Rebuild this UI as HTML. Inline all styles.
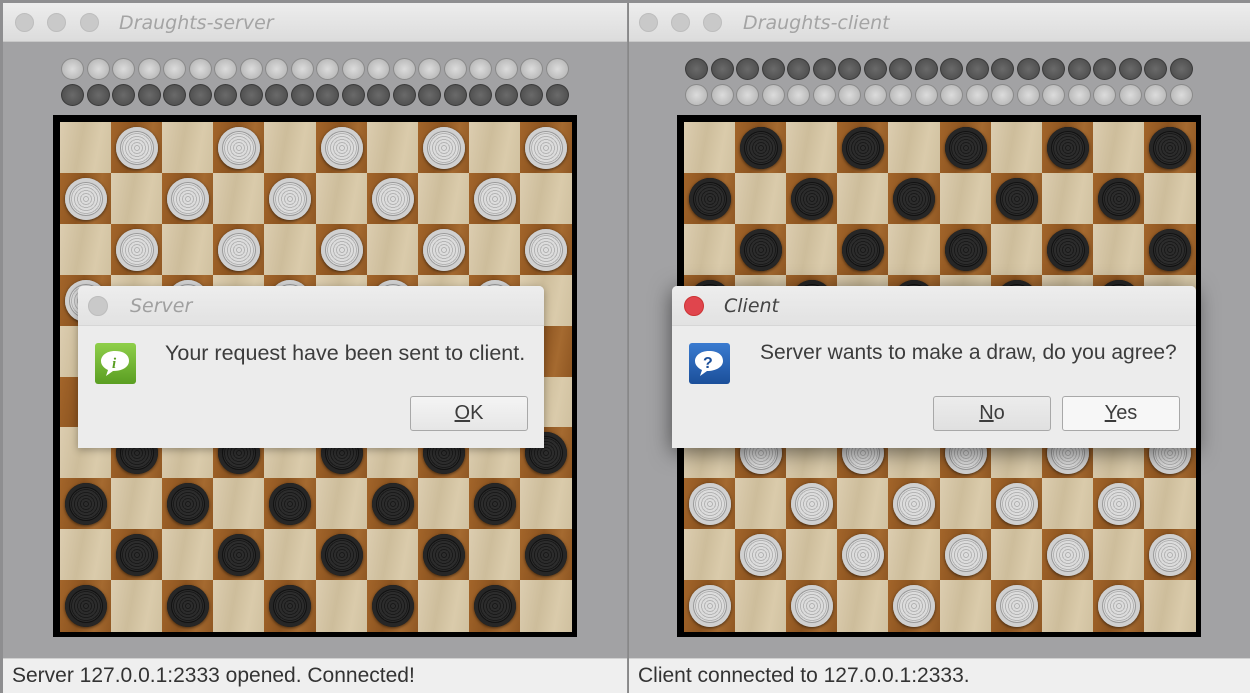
<!DOCTYPE html>
<html><head><meta charset="utf-8"><style>
*{margin:0;padding:0;box-sizing:border-box}
body{width:1250px;height:693px;background:#8e8e90;position:relative;overflow:hidden;font-family:"Liberation Sans","DejaVu Sans",sans-serif}
.win{position:absolute;top:3px;height:690px;background:#a2a2a4}
.tb{position:absolute;left:0;right:0;top:0;height:39px;background:linear-gradient(#ededed,#dcdcdc);border-bottom:1px solid #c8c8c8}
.dot{position:absolute;top:10px;width:19px;height:19px;border-radius:50%;background:#c9c9c9;border:1px solid #bdbdbd}
.tt{position:absolute;top:9px;font-family:"DejaVu Sans",sans-serif;font-style:italic;font-size:19px;color:#a4a4a4}
.status{position:absolute;left:0;right:0;top:655px;height:35px;background:#efefef;border-top:1px solid #d0d0d0;font-size:21px;color:#333;padding:5px 0 0 9px}
.board{position:absolute;top:115px;width:524px;height:522px;background:#000}
.sq{position:absolute;width:52px;height:52px}
.l{background:linear-gradient(100deg,#dccdb0,#cdbd9b 40%,#dacbab 70%,#cfc09f)}
.d{background:linear-gradient(100deg,#a3652a,#8c5420 40%,#a56a30 70%,#8e5622)}
.pc{position:absolute;width:42px;height:42px;border-radius:50%}
.w{background:repeating-radial-gradient(circle,#dcdcdc 0 2px,#b4b4b4 2px 3px);box-shadow:inset 0 0 0 4px #d0d0d0,inset 0 0 0 5px #999,0 1px 3px rgba(0,0,0,.6)}
.b{background:repeating-radial-gradient(circle,#2c2c2c 0 2px,#1a1a1a 2px 3px);box-shadow:inset 0 0 0 4px #262626,inset 0 0 0 5px #111,0 1px 3px rgba(0,0,0,.6)}
.mp{position:absolute;width:23px;height:22px;border-radius:50%}
.mw{background:radial-gradient(circle,#dcdcdc,#bcbcbc 70%,#a0a0a0);border:1px solid #8a8a8a}
.mb{background:radial-gradient(circle,#6a6a6a,#525252 70%,#3a3a3a);border:1px solid #3a3a3a}
.dlg{position:absolute;top:286px;height:162px;background:#ececec;border-radius:5px 5px 0 0}
.dtb{position:absolute;left:0;right:0;top:0;height:40px;background:linear-gradient(#ededed,#e2e2e2);border-radius:5px 5px 0 0;border-bottom:1px solid #d6d6d6}
.dt{position:absolute;top:9px;left:52px;font-family:"DejaVu Sans",sans-serif;font-style:italic;font-size:19px}
.msg{position:absolute;top:55px;font-size:21.5px;color:#3c3c3c;white-space:nowrap}
.btn{position:absolute;top:110px;width:118px;height:35px;border:1px solid #a8a8a8;border-radius:3px;background:linear-gradient(#f4f4f4,#e6e6e6);font-size:20px;color:#3c3c3c;text-align:center;line-height:33px}
.ic{position:absolute;top:57px;left:17px;width:41px;height:41px;border-radius:3px}
</style></head><body>
<div class="win" style="left:3px;width:624px">
 <div class="tb"><div class="dot" style="left:12px"></div><div class="dot" style="left:44px"></div><div class="dot" style="left:77px"></div><div class="tt" style="left:116px">Draughts-server</div></div>
 <div class="status">Server 127.0.0.1:2333 opened. Connected!</div>
</div>
<div class="win" style="left:628px;width:622px;border-left:1px solid #888">
 <div class="tb"><div class="dot" style="left:10px"></div><div class="dot" style="left:42px"></div><div class="dot" style="left:74px"></div><div class="tt" style="left:114px">Draughts-client</div></div>
 <div class="status">Client connected to 127.0.0.1:2333.</div>
</div>
<div id="b1" class="board" style="left:53px"></div>
<div id="b2" class="board" style="left:677px"></div>
<div id="m"></div>

<div class="dlg" style="left:78px;width:466px;box-shadow:0 2px 8px rgba(0,0,0,.3)">
 <div class="dtb"><div class="dot" style="left:10px;top:10px;width:20px;height:20px"></div><div class="dt" style="color:#a0a0a0">Server</div></div>
 <div class="ic" style="background:linear-gradient(#8fcf4a,#5a9e22)"><svg width="41" height="41"><path d="M20 8c-9 0-14 5-14 10 0 4 3 7 7 9l-2 6 7-5c9 0 16-4 16-10S29 8 20 8z" fill="#fff"/><text x="17" y="25" font-size="15" font-weight="bold" font-style="italic" fill="#5a9e22" font-family="Liberation Serif">i</text></svg></div>
 <div class="msg" style="left:87px">Your request have been sent to client.</div>
 <div class="btn" style="left:332px"><u>O</u>K</div>
</div>
<div class="dlg" style="left:672px;width:524px;box-shadow:0 4px 22px rgba(0,0,0,.55)">
 <div class="dtb"><div class="dot" style="left:12px;top:10px;width:20px;height:20px;background:#e0454d;border-color:#c33"></div><div class="dt" style="color:#444">Client</div></div>
 <div class="ic" style="background:linear-gradient(#3a7bd0,#1b4f9a)"><svg width="41" height="41"><path d="M20 8c-9 0-14 5-14 10 0 4 3 7 7 9l-2 6 7-5c9 0 16-4 16-10S29 8 20 8z" fill="#fff"/><text x="14" y="25" font-size="16" font-weight="bold" fill="#1b4f9a" font-family="Liberation Sans">?</text></svg></div>
 <div class="msg" style="left:88px;font-size:21px">Server wants to make a draw, do you agree?</div>
 <div class="btn" style="left:261px;background:linear-gradient(#ececec,#e0e0e0)"><u>N</u>o</div>
 <div class="btn" style="left:390px;background:#f7f7f7"><u>Y</u>es</div>
</div>
<script>
function board(id,top,bot){var b=document.getElementById(id),h='';
for(var r=0;r<10;r++)for(var c=0;c<10;c++){var dk=(r+c)%2==1;var x=7+c*51.1,y=7+r*50.9;
h+='<div class="sq '+(dk?'d':'l')+'" style="left:'+x+'px;top:'+y+'px"></div>';
if(dk&&(r<4||r>5))h+='<div class="pc '+(r<4?top:bot)+'" style="left:'+(x+5)+'px;top:'+(y+5)+'px"></div>';}
b.innerHTML=h;}
board('b1','w','b');board('b2','b','w');
var m='';function row(x0,y,cl){for(var i=0;i<20;i++)m+='<div class="mp '+cl+'" style="left:'+(x0+i*25.5)+'px;top:'+y+'px"></div>';}
row(61,58,'mw');row(61,84,'mb');row(685,58,'mb');row(685,84,'mw');
document.getElementById('m').innerHTML=m;
</script>
</body></html>
